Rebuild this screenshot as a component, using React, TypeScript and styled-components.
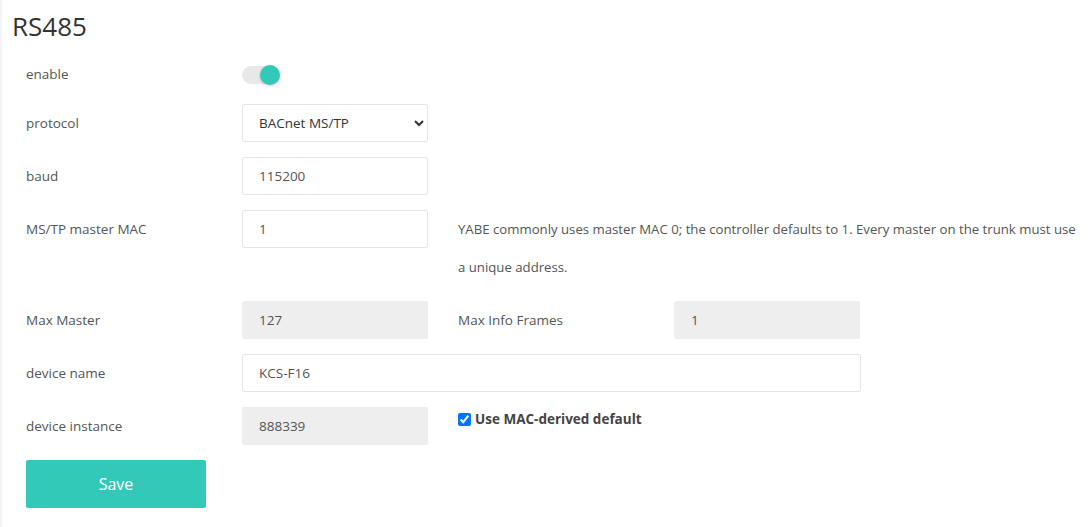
import React from "react";
import styled, { createGlobalStyle } from "styled-components";

const Global = createGlobalStyle`
  html, body { margin: 0; padding: 0; background: #f2f2f8; }
  body { font-family: "Open Sans", "Noto Sans", sans-serif; color: #555; }
  * { box-sizing: border-box; }
`;

const Panel = styled.div`
  margin-left: 2px;
  background: #fff;
  min-height: 527px;
  padding: 10px 0 0 10px;
`;

const Title = styled.h1`
  margin: 0 0 16px 0;
  font-size: 26px;
  font-weight: 400;
  color: #333;
  line-height: 32px;
`;

const Form = styled.div`
  padding-left: 14px;
  display: flex;
  flex-direction: column;
  gap: 15px;
`;

const Row = styled.div<{ $h?: number }>`
  display: flex;
  align-items: flex-start;
  height: ${(p) => (p.$h ? `${p.$h}px` : "auto")};
`;

const Label = styled.div<{ $w?: number; $lh?: number }>`
  width: ${(p) => p.$w ?? 216}px;
  flex: none;
  font-size: 13.5px;
  line-height: ${(p) => p.$lh ?? 38}px;
  color: #555;
`;

const Field = styled.div<{ $w?: number }>`
  width: ${(p) => p.$w ?? 186}px;
  flex: none;
  position: relative;
`;

const Input = styled.input`
  width: 100%;
  height: 38px;
  border: 1px solid #e6e6e6;
  border-radius: 2px;
  padding: 0 16px;
  font: inherit;
  font-size: 13.5px;
  color: #555;
  background: #fff;
  outline: none;
  &:disabled {
    background: #eeeeee;
    border-color: #eeeeee;
  }
`;

const Select = styled.select`
  width: 100%;
  height: 38px;
  border: 1px solid #e6e6e6;
  border-radius: 2px;
  padding: 0 16px;
  font: inherit;
  font-size: 13.5px;
  color: #333;
  background: #fff;
  appearance: none;
  outline: none;
`;

const Chevron = styled.svg`
  position: absolute;
  right: 3px;
  top: 15px;
  pointer-events: none;
`;

const Hint = styled.div`
  margin-left: 30px;
  font-size: 13.2px;
  line-height: 38px;
  color: #555;
  width: 622px;
  flex: none;
`;

const Side = styled.div`
  margin-left: 30px;
  display: flex;
  align-items: flex-start;
`;

const ToggleTrack = styled.div`
  margin-top: 8px;
  width: 37px;
  height: 18px;
  border-radius: 9px;
  background: #e8e8e8;
  position: relative;
`;

const ToggleKnob = styled.div`
  position: absolute;
  right: -1px;
  top: -1px;
  width: 20px;
  height: 20px;
  border-radius: 50%;
  background: #33c9b9;
  box-shadow: 0 1px 3px rgba(0, 0, 0, 0.2);
`;

const CheckLabel = styled.label`
  display: flex;
  align-items: center;
  gap: 4px;
  font-size: 13.5px;
  font-weight: 700;
  color: #444;
  margin-top: 3px;
  input {
    margin: 0;
    width: 13px;
    height: 13px;
    accent-color: #0075ff;
  }
`;

const SaveButton = styled.button`
  width: 180px;
  height: 48px;
  border: none;
  border-radius: 2px;
  background: #33c9b9;
  color: #fff;
  font: inherit;
  font-size: 16px;
  cursor: pointer;
`;

export default function App() {
  return (
    <>
      <Global />
      <Panel>
        <Title>RS485</Title>
        <Form>
          <Row $h={31}>
            <Label $lh={33}>enable</Label>
            <ToggleTrack>
              <ToggleKnob />
            </ToggleTrack>
          </Row>
          <Row>
            <Label>protocol</Label>
            <Field>
              <Select defaultValue="bacnet">
                <option value="bacnet">BACnet MS/TP</option>
                <option value="modbus">Modbus RTU</option>
              </Select>
              <Chevron width="12" height="8" viewBox="0 0 12 8">
                <path d="M2 2l4 4 4-4" fill="none" stroke="#333" strokeWidth="2" />
              </Chevron>
            </Field>
          </Row>
          <Row>
            <Label>baud</Label>
            <Field>
              <Input defaultValue="115200" />
            </Field>
          </Row>
          <Row>
            <Label>MS/TP master MAC</Label>
            <Field>
              <Input defaultValue="1" />
            </Field>
            <Hint>
              YABE commonly uses master MAC 0; the controller defaults to 1. Every master on the trunk must use a unique address.
            </Hint>
          </Row>
          <Row>
            <Label>Max Master</Label>
            <Field>
              <Input defaultValue="127" disabled />
            </Field>
            <Side>
              <Label>Max Info Frames</Label>
              <Field>
                <Input defaultValue="1" disabled />
              </Field>
            </Side>
          </Row>
          <Row>
            <Label>device name</Label>
            <Field $w={619}>
              <Input defaultValue="KCS-F16" />
            </Field>
          </Row>
          <Row>
            <Label>device instance</Label>
            <Field>
              <Input defaultValue="888339" disabled />
            </Field>
            <Side>
              <CheckLabel>
                <input type="checkbox" defaultChecked />
                Use MAC-derived default
              </CheckLabel>
            </Side>
          </Row>
          <Row>
            <SaveButton>Save</SaveButton>
          </Row>
        </Form>
      </Panel>
    </>
  );
}
